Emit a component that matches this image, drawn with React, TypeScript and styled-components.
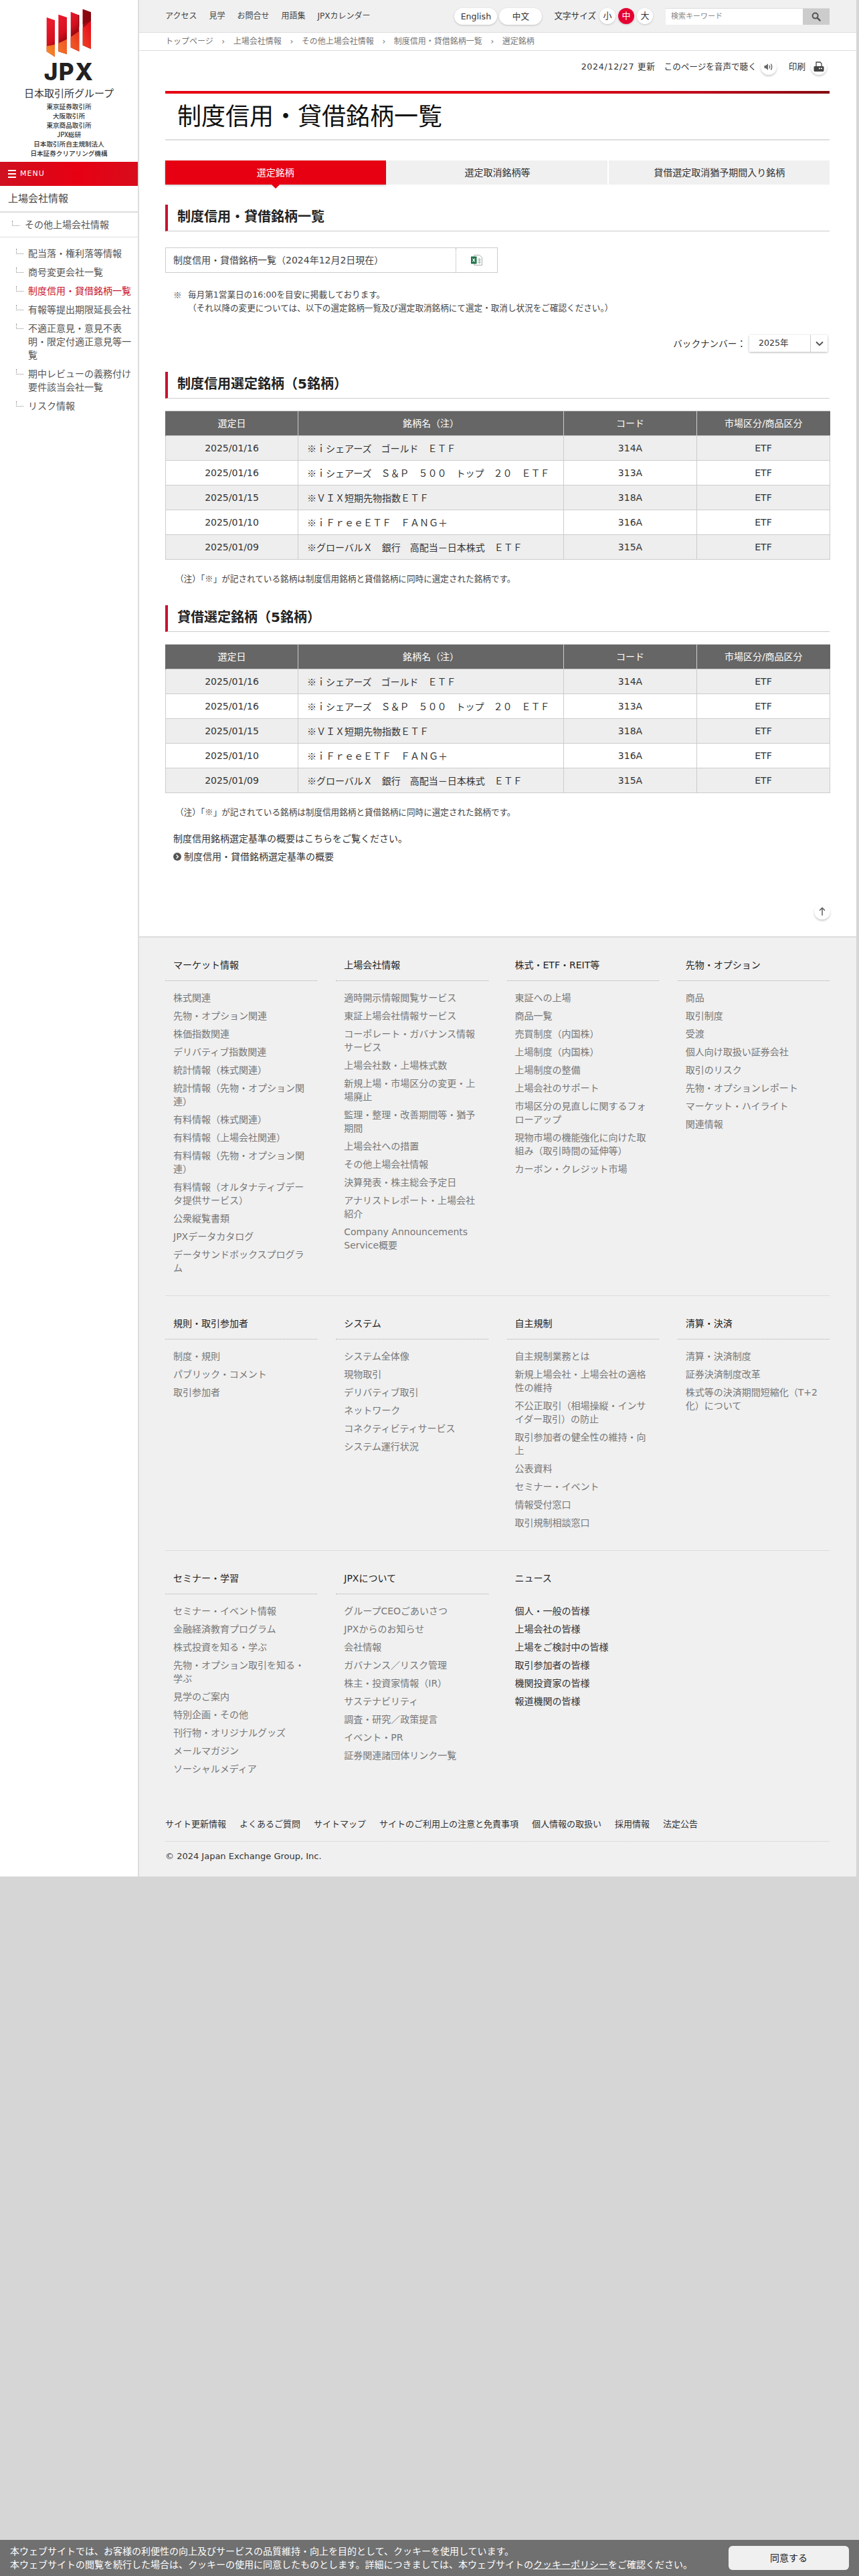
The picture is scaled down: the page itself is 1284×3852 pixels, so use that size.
import React from "react";
import styled, { createGlobalStyle } from "styled-components";

const FONT = `"DejaVu Sans", "Noto Sans CJK JP", sans-serif`;
const CJK = `"Noto Sans CJK JP", sans-serif`;

const Global = createGlobalStyle`
  html, body { margin: 0; padding: 0; background: #d6d6d6; }
  body { font-family: ${FONT}; color: #333; font-size: 14px; line-height: 20px; }
  * { box-sizing: border-box; }
`;

const Page = styled.div`
  width: 1280px;
  display: flex;
  align-items: stretch;
`;

/* Sidebar */
const Side = styled.aside`
  width: 208px;
  flex: none;
  background: #fff;
  border-right: 2px solid #ddd;
`;
const LogoBox = styled.div`
  height: 242px;
  padding-top: 12px;
  display: flex;
  flex-direction: column;
  align-items: center;
`;
const JpxWord = styled.div`
  font-family: Inter, "Liberation Sans", sans-serif;
  font-weight: 800;
  font-size: 35px;
  line-height: 26px;
  letter-spacing: 1.5px;
  color: #222;
  margin-top: 8px;
`;
const GroupName = styled.div`
  font-size: 15px;
  line-height: 20px;
  color: #333;
  margin-top: 9px;
  font-family: ${CJK};
`;
const GroupSub = styled.div`
  font-size: 9.6px;
  line-height: 14px;
  color: #333;
  text-align: center;
  margin-top: 3px;
  font-family: ${CJK};
  font-weight: 500;
`;
const MenuBar = styled.div`
  height: 36px;
  background: linear-gradient(90deg, #cf1020 0%, #e60012 55%, #d80c1c 100%);
  display: flex;
  align-items: center;
  padding-left: 12px;
  gap: 6px;
  color: #fff;
  font-size: 11px;
  letter-spacing: 1px;
`;
const Burger = styled.span`
  width: 12px;
  height: 12px;
  border-top: 2px solid #fff;
  border-bottom: 2px solid #fff;
  position: relative;
  &::after {
    content: "";
    position: absolute;
    left: 0;
    right: 0;
    top: 3px;
    height: 2px;
    background: #fff;
  }
`;
const SideTitle = styled.div`
  height: 40px;
  padding-left: 12px;
  display: flex;
  align-items: center;
  font-size: 15px;
  color: #444;
  border-bottom: 2px solid #ddd;
`;
const Dots = styled.span`
  position: absolute;
  width: 11px;
  height: 8px;
  border-left: 1px dotted #888;
  border-bottom: 1px dotted #888;
`;
const SideSub = styled.div`
  position: relative;
  height: 37px;
  padding-left: 37px;
  display: flex;
  align-items: center;
  color: #555;
  border-bottom: 1px solid #ddd;
  ${Dots} { left: 18px; top: 12px; }
`;
const SideList = styled.ul`
  list-style: none;
  margin: 14px 0 0;
  padding: 0 6px 0 42px;
`;
const SideItem = styled.li<{ $active?: boolean }>`
  position: relative;
  margin-bottom: 8px;
  color: ${(p) => (p.$active ? "#c8132f" : "#555")};
  ${Dots} { left: -18px; top: 3px; }
`;

/* Main */
const Main = styled.main`
  flex: 1;
  min-width: 0;
  display: flex;
  flex-direction: column;
`;
const TopBar = styled.div`
  height: 49px;
  background: #f0f0f0;
  border-bottom: 1px solid #ddd;
  display: flex;
  align-items: center;
  padding: 0 40px 0 39px;
`;
const TopLinks = styled.nav`
  display: flex;
  gap: 18px;
  font-size: 12px;
  color: #444;
`;
const TopRight = styled.div`
  margin-left: auto;
  display: flex;
  align-items: center;
`;
const Pill = styled.span`
  width: 64px;
  height: 25px;
  border-radius: 13px;
  background: #fff;
  box-shadow: 0 1px 3px rgba(0, 0, 0, 0.2);
  font-size: 12.6px;
  line-height: 25px;
  text-align: center;
  margin-right: 3px;
  color: #333;
`;
const SizeLabel = styled.span`
  font-size: 12.6px;
  margin: 0 5px 0 15px;
  color: #333;
`;
const SizeDot = styled.span<{ $on?: boolean }>`
  width: 24px;
  height: 24px;
  border-radius: 50%;
  background: ${(p) => (p.$on ? "#e60033" : "#fff")};
  color: ${(p) => (p.$on ? "#fff" : "#333")};
  box-shadow: 0 1px 3px rgba(0, 0, 0, 0.18);
  font-size: 13px;
  line-height: 24px;
  text-align: center;
  margin-right: 4px;
`;
const SearchBox = styled.div`
  margin-left: 15px;
  width: 245px;
  height: 25px;
  display: flex;
  background: #fff;
  border-top: 1px solid #ddd;
`;
const SearchInput = styled.span`
  flex: 1;
  font-size: 11px;
  line-height: 23px;
  padding-left: 8px;
  color: #888;
`;
const SearchBtn = styled.span`
  width: 40px;
  background: #ccc;
  display: flex;
  align-items: center;
  justify-content: center;
`;
const Crumbs = styled.div`
  height: 27px;
  padding-left: 39px;
  background: #fff;
  border-bottom: 1px solid #ddd;
  display: flex;
  align-items: center;
  font-size: 12px;
  color: #777;
`;
const CrumbSep = styled.span`
  width: 30px;
  text-align: center;
  font-size: 12px;
  color: #777;
`;
const Content = styled.div`
  background: #fff;
  padding: 12px 40px 25px 39px;
`;
const UtilRow = styled.div`
  height: 24px;
  margin-right: 4px;
  display: flex;
  justify-content: flex-end;
  align-items: center;
  font-size: 12.6px;
  color: #333;
`;
const DateText = styled.span`
  letter-spacing: 0.7px;
  margin-right: 13px;
`;
const RoundIcon = styled.span`
  width: 24px;
  height: 24px;
  border-radius: 50%;
  background: #fff;
  box-shadow: 0 2px 3px rgba(0, 0, 0, 0.2);
  display: inline-flex;
  align-items: center;
  justify-content: center;
  margin-left: 6px;
`;
const PrintLabel = styled.span`
  margin-left: 18px;
  margin-right: 2px;
`;
const TitleWrap = styled.div`
  margin-top: 24px;
`;
const TitleBar = styled.div`
  height: 4px;
  background: linear-gradient(90deg, #e60012 0%, #e60012 50%, #c00a1c 80%, #850a10 100%);
`;
const H1 = styled.h1`
  margin: 0;
  height: 70px;
  font-size: 36px;
  font-weight: 400;
  line-height: 70px;
  padding-left: 18px;
  color: #111;
  border-bottom: 2px solid #ddd;
`;
const Tabs = styled.div`
  margin-top: 30px;
  display: grid;
  grid-template-columns: repeat(3, 1fr);
  gap: 2px;
`;
const Tab = styled.div<{ $on?: boolean }>`
  position: relative;
  height: 36px;
  line-height: 36px;
  text-align: center;
  background: ${(p) => (p.$on ? "#e60012" : "#f0f0f0")};
  color: ${(p) => (p.$on ? "#fff" : "#333")};
  box-shadow: ${(p) => (p.$on ? "0 1px 3px rgba(0,0,0,.25)" : "none")};
  ${(p) =>
    p.$on &&
    `&::after {
      content: "";
      position: absolute;
      left: 50%;
      bottom: -6px;
      margin-left: -6px;
      border-left: 6px solid transparent;
      border-right: 6px solid transparent;
      border-top: 6px solid #e60012;
    }`}
`;
const H2 = styled.h2`
  margin: 30px 0 0;
  height: 40px;
  line-height: 37px;
  font-size: 20px;
  font-weight: 700;
  padding-left: 14px;
  color: #222;
  border-left: 4px solid #c8132f;
  border-bottom: 1px solid #ccc;
`;
const FileBox = styled.div`
  margin-top: 24px;
  width: 497px;
  height: 38px;
  display: flex;
  border: 1px solid #ccc;
`;
const FileName = styled.div`
  width: 434px;
  padding-left: 11px;
  line-height: 36px;
  color: #444;
  border-right: 1px dotted #aaa;
`;
const FileIcon = styled.div`
  flex: 1;
  display: flex;
  align-items: center;
  justify-content: center;
`;
const Notice = styled.div`
  margin-top: 23px;
  padding-left: 34px;
  position: relative;
  font-size: 12.6px;
  color: #444;
`;
const NoticeMark = styled.span`
  position: absolute;
  left: 12px;
  top: 0;
  font-family: ${CJK};
`;
const BackRow = styled.div`
  margin-top: 30px;
  margin-right: 3px;
  display: flex;
  justify-content: flex-end;
  align-items: center;
  gap: 5px;
  font-size: 13.6px;
  color: #333;
`;
const BackSelect = styled.div`
  width: 117px;
  height: 25px;
  display: flex;
  background: #fff;
  box-shadow: 0 1px 3px rgba(0, 0, 0, 0.3);
  line-height: 24px;
  font-size: 12.6px;
`;
const BackValue = styled.span`
  width: 92px;
  padding-left: 14px;
  border-right: 1px solid #ccc;
`;
const BackArrow = styled.span`
  flex: 1;
  display: flex;
  align-items: center;
  justify-content: center;
`;
const Table = styled.table`
  margin-top: 18px;
  width: 100%;
  border-collapse: collapse;
  table-layout: fixed;
`;
const Th = styled.th`
  height: 37px;
  padding: 0;
  background: #666;
  color: #fff;
  font-weight: 400;
  font-size: 14px;
  border-top: 1px solid #ccc;
  border-left: 1px solid #ccc;
  &:first-child { border-left: 1px solid #666; }
`;
const Tr = styled.tr`
  &:nth-child(odd) td { background: #eee; }
  &:nth-child(even) td { background: #fff; }
`;
const Td = styled.td<{ $name?: boolean }>`
  height: 37px;
  padding: ${(p) => (p.$name ? "0 0 0 13px" : "0")};
  text-align: ${(p) => (p.$name ? "left" : "center")};
  font-family: ${(p) => (p.$name ? CJK : "inherit")};
  border: 1px solid #ccc;
  color: #333;
  font-size: 14px;
`;
const Note = styled.p`
  margin: 18px 0 0;
  padding-left: 15px;
  font-size: 12.6px;
  line-height: 20px;
  font-family: ${CJK};
  color: #444;
`;
const Para = styled.p`
  margin: 20px 0 0;
  padding-left: 12px;
  color: #333;
`;
const LinkRow = styled.div`
  margin-top: 7px;
  padding-left: 12px;
  display: flex;
  align-items: center;
  gap: 4px;
  color: #333;
`;
const ToTop = styled.div`
  margin-top: 60px;
  margin-right: -1px;
  display: flex;
  justify-content: flex-end;
`;
const TopCircle = styled(RoundIcon)`
  margin-left: 0;
`;

/* Footer */
const Footer = styled.footer`
  background: #f0f0f0;
  border-top: 2px solid #ddd;
  padding: 0 40px 20px 39px;
`;
const FootSection = styled.section<{ $last?: boolean }>`
  display: grid;
  grid-template-columns: repeat(4, 1fr);
  column-gap: 28px;
  padding: ${(p) => (p.$last ? "31px 0 0" : "31px 0 24px")};
  border-bottom: ${(p) => (p.$last ? "none" : "1px solid #ddd")};
  min-height: ${(p) => (p.$last ? "399px" : "auto")};
`;
const ColTitle = styled.div<{ $plain?: boolean }>`
  padding: 0 0 13px 12px;
  color: #222;
  border-bottom: 1px dotted ${(p) => (p.$plain ? "transparent" : "#aaa")};
`;
const ColList = styled.ul`
  list-style: none;
  margin: 15px 0 0;
  padding: 0 18px 0 12px;
`;
const ColItem = styled.li<{ $dark?: boolean }>`
  margin-bottom: 7px;
  color: ${(p) => (p.$dark ? "#333" : "#777")};
`;
const FootLinks = styled.div`
  display: flex;
  gap: 20px;
  font-size: 13px;
  color: #333;
  padding-bottom: 15px;
  border-bottom: 1px dotted #ccc;
`;
const Copy = styled.div`
  margin-top: 12px;
  font-size: 13px;
  line-height: 20px;
  color: #333;
`;

/* Cookie */
const Cookie = styled.div`
  position: fixed;
  left: 0;
  right: 0;
  bottom: 0;
  height: 54px;
  background: #707070;
  color: #fff;
  display: flex;
  align-items: center;
  justify-content: space-between;
  padding: 0 15px;
`;
const CookieText = styled.div`
  font-size: 14px;
`;
const CookieLink = styled.span`
  text-decoration: underline;
`;
const CookieBtn = styled.span`
  width: 180px;
  height: 36px;
  border-radius: 6px;
  background: #f0f0f0;
  color: #222;
  text-align: center;
  line-height: 36px;
`;

const rows = [
  ["2025/01/16", "※ｉシェアーズ　ゴールド　ＥＴＦ", "314A"],
  ["2025/01/16", "※ｉシェアーズ　Ｓ＆Ｐ　５００　トップ　２０　ＥＴＦ", "313A"],
  ["2025/01/15", "※ＶＩＸ短期先物指数ＥＴＦ", "318A"],
  ["2025/01/10", "※ｉＦｒｅｅＥＴＦ　ＦＡＮＧ＋", "316A"],
  ["2025/01/09", "※グローバルＸ　銀行　高配当－日本株式　ＥＴＦ", "315A"],
];

const sideItems = [
  "配当落・権利落等情報",
  "商号変更会社一覧",
  "制度信用・貸借銘柄一覧",
  "有報等提出期限延長会社",
  "不適正意見・意見不表明・限定付適正意見等一覧",
  "期中レビューの義務付け要件該当会社一覧",
  "リスク情報",
];

type Col = { t: string; items: string[]; dark?: boolean; plain?: boolean };
const sections: Col[][] = [
  [
    {
      t: "マーケット情報",
      items: [
        "株式関連", "先物・オプション関連", "株価指数関連", "デリバティブ指数関連", "統計情報（株式関連）",
        "統計情報（先物・オプション関連）", "有料情報（株式関連）", "有料情報（上場会社関連）",
        "有料情報（先物・オプション関連）", "有料情報（オルタナティブデータ提供サービス）", "公衆縦覧書類",
        "JPXデータカタログ", "データサンドボックスプログラム",
      ],
    },
    {
      t: "上場会社情報",
      items: [
        "適時開示情報閲覧サービス", "東証上場会社情報サービス", "コーポレート・ガバナンス情報サービス",
        "上場会社数・上場株式数", "新規上場・市場区分の変更・上場廃止", "監理・整理・改善期間等・猶予期間",
        "上場会社への措置", "その他上場会社情報", "決算発表・株主総会予定日", "アナリストレポート・上場会社紹介",
        "Company Announcements Service概要",
      ],
    },
    {
      t: "株式・ETF・REIT等",
      items: [
        "東証への上場", "商品一覧", "売買制度（内国株）", "上場制度（内国株）", "上場制度の整備", "上場会社のサポート",
        "市場区分の見直しに関するフォローアップ", "現物市場の機能強化に向けた取組み（取引時間の延伸等）",
        "カーボン・クレジット市場",
      ],
    },
    {
      t: "先物・オプション",
      items: ["商品", "取引制度", "受渡", "個人向け取扱い証券会社", "取引のリスク", "先物・オプションレポート", "マーケット・ハイライト", "関連情報"],
    },
  ],
  [
    { t: "規則・取引参加者", items: ["制度・規則", "パブリック・コメント", "取引参加者"] },
    { t: "システム", items: ["システム全体像", "現物取引", "デリバティブ取引", "ネットワーク", "コネクティビティサービス", "システム運行状況"] },
    {
      t: "自主規制",
      items: [
        "自主規制業務とは", "新規上場会社・上場会社の適格性の維持", "不公正取引（相場操縦・インサイダー取引）の防止",
        "取引参加者の健全性の維持・向上", "公表資料", "セミナー・イベント", "情報受付窓口", "取引規制相談窓口",
      ],
    },
    { t: "清算・決済", items: ["清算・決済制度", "証券決済制度改革", "株式等の決済期間短縮化（T+2化）について"] },
  ],
  [
    {
      t: "セミナー・学習",
      items: [
        "セミナー・イベント情報", "金融経済教育プログラム", "株式投資を知る・学ぶ", "先物・オプション取引を知る・学ぶ",
        "見学のご案内", "特別企画・その他", "刊行物・オリジナルグッズ", "メールマガジン", "ソーシャルメディア",
      ],
    },
    {
      t: "JPXについて",
      items: [
        "グループCEOごあいさつ", "JPXからのお知らせ", "会社情報", "ガバナンス／リスク管理", "株主・投資家情報（IR）",
        "サステナビリティ", "調査・研究／政策提言", "イベント・PR", "証券関連諸団体リンク一覧",
      ],
    },
    {
      t: "ニュース",
      plain: true,
      dark: true,
      items: ["個人・一般の皆様", "上場会社の皆様", "上場をご検討中の皆様", "取引参加者の皆様", "機関投資家の皆様", "報道機関の皆様"],
    },
  ],
];

const Logo = () => (
  <svg width="70" height="74" viewBox="69 11 70 74" aria-hidden="true">
    <defs>
      <clipPath id="bars">
        <polygon points="70.7,25 83,29.3 83,84 70.7,76" />
        <polygon points="88.3,20.7 101,25 101,80 88.3,76" />
        <polygon points="106.7,16.7 119.3,21.7 119.3,76 106.7,70" />
        <polygon points="124.7,12.7 137,17.3 137,72.3 124.7,66.7" />
      </clipPath>
      <linearGradient id="upper" gradientUnits="userSpaceOnUse" x1="78" y1="30" x2="104" y2="66">
        <stop offset="0" stopColor="#ea1a2c" />
        <stop offset="0.55" stopColor="#d50f1e" />
        <stop offset="1" stopColor="#6e0408" />
      </linearGradient>
      <linearGradient id="lower" gradientUnits="userSpaceOnUse" x1="70" y1="80" x2="137" y2="40">
        <stop offset="0" stopColor="#f58a2a" />
        <stop offset="0.6" stopColor="#ef4a22" />
        <stop offset="1" stopColor="#e6101e" />
      </linearGradient>
    </defs>
    <g clipPath="url(#bars)">
      <rect x="69" y="11" width="70" height="74" fill="url(#upper)" />
      <path d="M118 11 L139 11 L139 30 Q130 32 124 36 L118 40 Z" fill="#8a0710" />
      <path d="M69 68 Q100 66 139 28 L139 85 L69 85 Z" fill="url(#lower)" />
    </g>
  </svg>
);

const SearchIcon = () => (
  <svg width="14" height="14" viewBox="0 0 14 14" aria-hidden="true">
    <circle cx="5.6" cy="5.6" r="4" fill="none" stroke="#555" strokeWidth="2" />
    <path d="M8.6 8.6 L12.6 12.6" stroke="#555" strokeWidth="2.4" strokeLinecap="round" />
  </svg>
);
const SpeakerIcon = () => (
  <svg width="14" height="12" viewBox="0 0 14 12" aria-hidden="true">
    <path d="M0.5 4 H2.6 L6 1.2 V10.8 L2.6 8 H0.5 Z" fill="#666" />
    <path d="M8 3.5 Q9.4 6 8 8.5 M10.4 1.5 Q13 6 10.4 10.5" fill="none" stroke="#666" strokeWidth="1.4" />
  </svg>
);
const PrinterIcon = () => (
  <svg width="16" height="16" viewBox="0 0 16 16" aria-hidden="true">
    <path d="M4 7 V1 H10 L12 3 V7" fill="#fff" stroke="#444" strokeWidth="1.3" />
    <rect x="0.5" y="7" width="15" height="8" rx="1.5" fill="#444" />
    <rect x="8" y="9.6" width="2" height="1.6" fill="#fff" />
    <rect x="11" y="9.6" width="2" height="1.6" fill="#fff" />
  </svg>
);
const ExcelIcon = () => (
  <svg width="17" height="16" viewBox="0 0 17 16" aria-hidden="true">
    <path d="M5 0.5 H12.5 L16.5 4 V15.5 H5 Z" fill="#fff" stroke="#999" strokeWidth="0.8" />
    <path d="M10 6.5 H15 M10 9 H15 M10 11.5 H15 M12.5 5 V13.5" stroke="#8fa89a" strokeWidth="0.8" />
    <rect x="0" y="2.5" width="8.5" height="11" fill="#20744a" />
    <path d="M2.4 5.6 L6 10.4 M6 5.6 L2.4 10.4" stroke="#fff" strokeWidth="1.1" />
  </svg>
);
const Chevron = () => (
  <svg width="12" height="8" viewBox="0 0 12 8" aria-hidden="true">
    <path d="M1 1.2 L6 6.2 L11 1.2" fill="none" stroke="#555" strokeWidth="2" />
  </svg>
);
const UpArrow = () => (
  <svg width="10" height="14" viewBox="0 0 10 14" aria-hidden="true">
    <path d="M5 13 V1.5 M1 5.5 L5 1.5 L9 5.5" fill="none" stroke="#555" strokeWidth="1.4" />
  </svg>
);
const GoIcon = () => (
  <svg width="12" height="12" viewBox="0 0 12 12" aria-hidden="true">
    <circle cx="6" cy="6" r="6" fill="#555" />
    <path d="M4.6 3.2 L7.4 6 L4.6 8.8" fill="none" stroke="#fff" strokeWidth="1.4" />
  </svg>
);

const DataTable = () => (
  <Table>
    <colgroup>
      <col style={{ width: 198 }} />
      <col style={{ width: 397 }} />
      <col style={{ width: 199 }} />
      <col style={{ width: 199 }} />
    </colgroup>
    <thead>
      <tr>
        <Th>選定日</Th>
        <Th>銘柄名（注）</Th>
        <Th>コード</Th>
        <Th>市場区分/商品区分</Th>
      </tr>
    </thead>
    <tbody>
      {rows.map((r, i) => (
        <Tr key={i}>
          <Td>{r[0]}</Td>
          <Td $name>{r[1]}</Td>
          <Td>{r[2]}</Td>
          <Td>ETF</Td>
        </Tr>
      ))}
    </tbody>
  </Table>
);

export default function App() {
  return (
    <>
      <Global />
      <Page>
        <Side>
          <LogoBox>
            <Logo />
            <JpxWord>JPX</JpxWord>
            <GroupName>日本取引所グループ</GroupName>
            <GroupSub>
              東京証券取引所<br />大阪取引所<br />東京商品取引所<br />JPX総研<br />日本取引所自主規制法人<br />日本証券クリアリング機構
            </GroupSub>
          </LogoBox>
          <MenuBar><Burger />MENU</MenuBar>
          <SideTitle>上場会社情報</SideTitle>
          <SideSub><Dots />その他上場会社情報</SideSub>
          <SideList>
            {sideItems.map((s, i) => (
              <SideItem key={s} $active={i === 2}><Dots />{s}</SideItem>
            ))}
          </SideList>
        </Side>
        <Main>
          <TopBar>
            <TopLinks>
              <span>アクセス</span><span>見学</span><span>お問合せ</span><span>用語集</span><span>JPXカレンダー</span>
            </TopLinks>
            <TopRight>
              <Pill>English</Pill>
              <Pill>中文</Pill>
              <SizeLabel>文字サイズ</SizeLabel>
              <SizeDot>小</SizeDot>
              <SizeDot $on>中</SizeDot>
              <SizeDot>大</SizeDot>
              <SearchBox>
                <SearchInput>検索キーワード</SearchInput>
                <SearchBtn><SearchIcon /></SearchBtn>
              </SearchBox>
            </TopRight>
          </TopBar>
          <Crumbs>
            <span>トップページ</span><CrumbSep>›</CrumbSep>
            <span>上場会社情報</span><CrumbSep>›</CrumbSep>
            <span>その他上場会社情報</span><CrumbSep>›</CrumbSep>
            <span>制度信用・貸借銘柄一覧</span><CrumbSep>›</CrumbSep>
            <span>選定銘柄</span>
          </Crumbs>
          <Content>
            <UtilRow>
              <DateText>2024/12/27 更新</DateText>
              <span>このページを音声で聴く</span>
              <RoundIcon><SpeakerIcon /></RoundIcon>
              <PrintLabel>印刷</PrintLabel>
              <RoundIcon><PrinterIcon /></RoundIcon>
            </UtilRow>
            <TitleWrap>
              <TitleBar />
              <H1>制度信用・貸借銘柄一覧</H1>
            </TitleWrap>
            <Tabs>
              <Tab $on>選定銘柄</Tab>
              <Tab>選定取消銘柄等</Tab>
              <Tab>貸借選定取消猶予期間入り銘柄</Tab>
            </Tabs>
            <H2>制度信用・貸借銘柄一覧</H2>
            <FileBox>
              <FileName>制度信用・貸借銘柄一覧（2024年12月2日現在）</FileName>
              <FileIcon><ExcelIcon /></FileIcon>
            </FileBox>
            <Notice>
              <NoticeMark>※</NoticeMark>
              毎月第1営業日の16:00を目安に掲載しております。<br />
              （それ以降の変更については、以下の選定銘柄一覧及び選定取消銘柄にて選定・取消し状況をご確認ください。）
            </Notice>
            <BackRow>
              バックナンバー：
              <BackSelect>
                <BackValue>2025年</BackValue>
                <BackArrow><Chevron /></BackArrow>
              </BackSelect>
            </BackRow>
            <H2>制度信用選定銘柄（5銘柄）</H2>
            <DataTable />
            <Note>（注）「※」が記されている銘柄は制度信用銘柄と貸借銘柄に同時に選定された銘柄です。</Note>
            <H2>貸借選定銘柄（5銘柄）</H2>
            <DataTable />
            <Note>（注）「※」が記されている銘柄は制度信用銘柄と貸借銘柄に同時に選定された銘柄です。</Note>
            <Para>制度信用銘柄選定基準の概要はこちらをご覧ください。</Para>
            <LinkRow><GoIcon />制度信用・貸借銘柄選定基準の概要</LinkRow>
            <ToTop><TopCircle><UpArrow /></TopCircle></ToTop>
          </Content>
          <Footer>
            {sections.map((cols, i) => (
              <FootSection key={i} $last={i === 2}>
                {cols.map((c) => (
                  <div key={c.t}>
                    <ColTitle $plain={c.plain}>{c.t}</ColTitle>
                    <ColList>
                      {c.items.map((it) => (
                        <ColItem key={it} $dark={c.dark}>{it}</ColItem>
                      ))}
                    </ColList>
                  </div>
                ))}
              </FootSection>
            ))}
            <FootLinks>
              <span>サイト更新情報</span><span>よくあるご質問</span><span>サイトマップ</span>
              <span>サイトのご利用上の注意と免責事項</span><span>個人情報の取扱い</span><span>採用情報</span><span>法定公告</span>
            </FootLinks>
            <Copy>© 2024 Japan Exchange Group, Inc.</Copy>
          </Footer>
        </Main>
      </Page>
      <Cookie>
        <CookieText>
          本ウェブサイトでは、お客様の利便性の向上及びサービスの品質維持・向上を目的として、クッキーを使用しています。<br />
          本ウェブサイトの閲覧を続行した場合は、クッキーの使用に同意したものとします。詳細につきましては、本ウェブサイトの<CookieLink>クッキーポリシー</CookieLink>をご確認ください。
        </CookieText>
        <CookieBtn>同意する</CookieBtn>
      </Cookie>
    </>
  );
}
